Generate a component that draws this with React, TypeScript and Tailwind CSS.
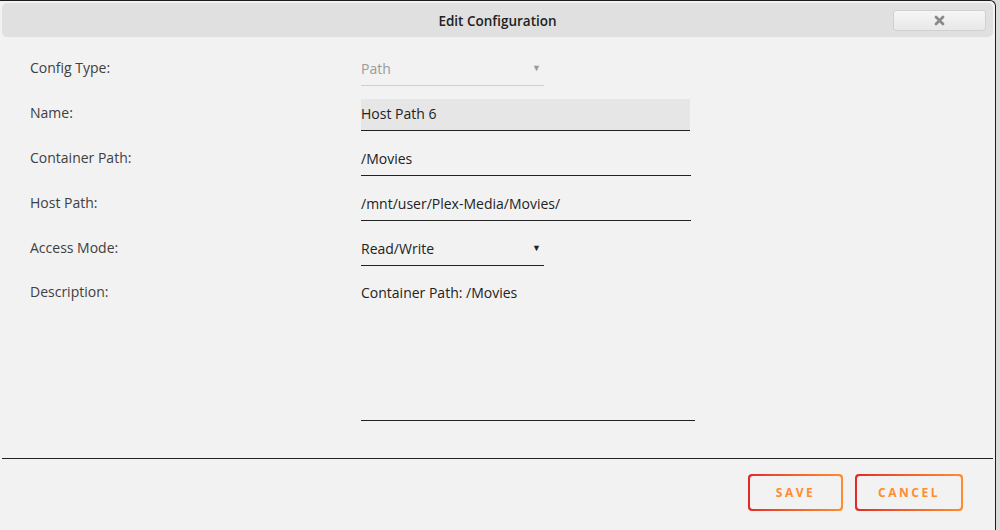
import { ReactNode } from 'react'

const font = { fontFamily: '"Open Sans", "Noto Sans", sans-serif' }

function Row({ label, children, top = false }: { label: string; children: ReactNode; top?: boolean }) {
  return (
    <div className={`flex ${top ? 'items-start' : 'items-center'}`}>
      <div className={`w-[361px] pl-[30px] text-[14px] text-[#404040] ${top ? 'pt-[2px]' : 'pb-[5px]'}`}>{label}</div>
      {children}
    </div>
  )
}

function GradientButton({ label, width }: { label: string; width: string }) {
  return (
    <div className={`${width} h-[37px] rounded-[4px] p-[2px] bg-gradient-to-r from-[#e22828] to-[#ff8c2f]`}>
      <button className="w-full h-full rounded-[3px] bg-[#f2f2f2] text-[12px] font-bold tracking-[2.5px] text-[#ff8c2f]">
        {label}
      </button>
    </div>
  )
}

export default function App() {
  return (
    <div className="w-[1000px] h-[530px] bg-[#dcdcdc] overflow-hidden" style={font}>
      <div className="w-[996px] h-[540px] bg-[#f2f2f2] border-t border-r border-[#1c1c1c] rounded-tr-[6px] flex flex-col">
        {/* Title bar */}
        <div className="mx-[2px] mt-[2px] h-[34px] rounded-[5px] bg-[#e0e0e0] flex items-center relative">
          <div className="flex-1 text-center text-[13.5px] font-semibold text-[#222] pt-[2px]">Edit Configuration</div>
          <button className="absolute right-[7px] top-[7px] w-[93px] h-[21px] rounded-[3px] border border-[#d0d0d0] bg-gradient-to-b from-[#f6f6f6] to-[#e8e8e8] flex items-center justify-center">
            <svg width="11" height="11" viewBox="0 0 11 11">
              <path d="M2 2 L9 9 M9 2 L2 9" stroke="#8a8a8a" strokeWidth="2.8" strokeLinecap="round" />
            </svg>
          </button>
        </div>

        {/* Form */}
        <div className="flex flex-col gap-[13px] mt-[17px]">
          <Row label="Config Type:">
            <div className="w-[183px] h-[32px] pb-[3px] border-b border-[#cfcfcf] flex items-center justify-between text-[14px] text-[#9a9a9a]">
              <span>Path</span>
              <span className="text-[9px] pr-[3px] text-[#9a9a9a]">▼</span>
            </div>
          </Row>
          <Row label="Name:">
            <div className="w-[329px] h-[32px] pb-[2px] bg-[#e6e6e6] border-b border-[#222] flex items-center text-[14px] text-[#222]">
              Host Path 6
            </div>
          </Row>
          <Row label="Container Path:">
            <div className="w-[330px] h-[32px] pb-[3px] border-b border-[#222] flex items-center text-[14px] text-[#222]">
              /Movies
            </div>
          </Row>
          <Row label="Host Path:">
            <div className="w-[330px] h-[32px] pb-[3px] border-b border-[#222] flex items-center text-[14px] text-[#222]">
              /mnt/user/Plex-Media/Movies/
            </div>
          </Row>
          <Row label="Access Mode:">
            <div className="w-[183px] h-[32px] pb-[3px] border-b border-[#222] flex items-center justify-between text-[14px] text-[#222]">
              <span>Read/Write</span>
              <span className="text-[9px] pr-[3px] text-[#222]">▼</span>
            </div>
          </Row>
          <Row label="Description:" top>
            <div className="w-[334px] h-[142px] border-b border-[#222] pt-[3px] text-[14px] text-[#222]">
              Container Path: /Movies
            </div>
          </Row>
        </div>

        {/* Footer */}
        <div className="mt-[37px] mx-[2px] border-t border-[#222]" />
        <div className="flex justify-end gap-[12px] pt-[15px] pr-[32px]">
          <GradientButton label="SAVE" width="w-[95px]" />
          <GradientButton label="CANCEL" width="w-[108px]" />
        </div>
      </div>
    </div>
  )
}
